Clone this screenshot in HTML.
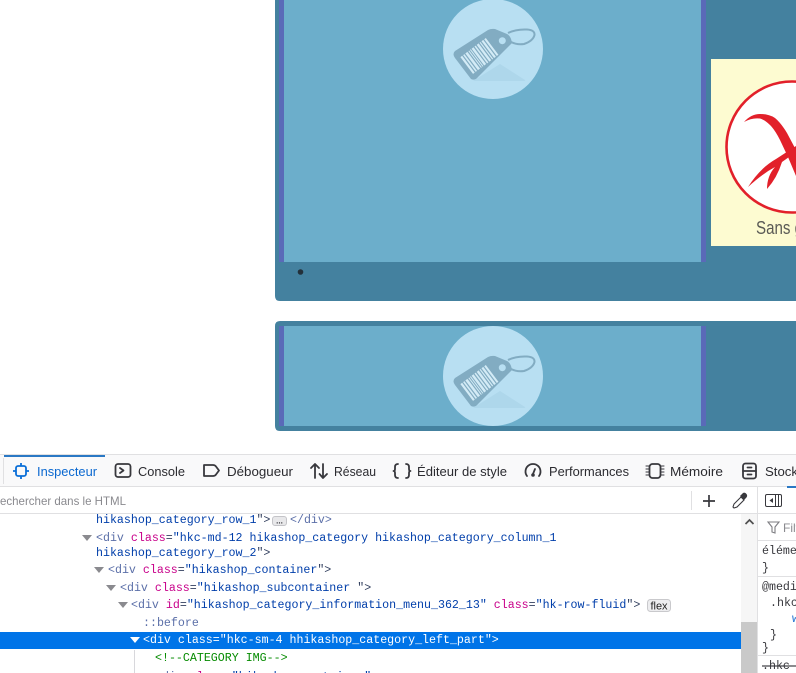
<!DOCTYPE html>
<html lang="fr">
<head>
<meta charset="utf-8">
<title>Inspecteur</title>
<style>
html,body{margin:0;padding:0;background:#fff;width:796px;height:673px;overflow:hidden}
svg{display:block}
.ui{font-family:"Liberation Sans",sans-serif;font-size:12.5px;fill:#2b2b30}
.m{font-family:"Liberation Mono",monospace;font-size:11.64px;fill:#003eaa;white-space:pre}
.t{fill:#5b6fa8}.a{fill:#c8008a}.v{fill:#003eaa}.d{fill:#33405f}
.ic{fill:none;stroke:#38383d;stroke-width:1.8;stroke-linejoin:round;stroke-linecap:round}
</style>
</head>
<body>
<svg width="796" height="673" viewBox="0 0 796 673" xmlns="http://www.w3.org/2000/svg">
<defs>
<g id="tag">
  <circle cx="493" cy="49" r="50" fill="#b8dff2"/>
  <path d="M473,81 L500,64 L525,80 Q526,81 523,81 Z" fill="#aed7eb"/>
  <path d="M508,33 Q516,29 527,29.500 Q535,30 534.500,35 Q533,41 524,44 Q517,45 511,42" fill="none" stroke="#82acc2" stroke-width="2"/>
  <path d="M455,51 L488,30 Q491,28.500 495,29 L507,34 Q511,36 512,43 L478,77 Q475,81 471,79 L455,58 Q452,54 455,51 Z" fill="#82acc2"/>
  <line x1="466.700" y1="65.500" x2="493.300" y2="45.500" stroke="#d3ebf6" stroke-width="21" stroke-dasharray="2.200 1.200 1.600 1.200 2.600 1.200 1 1 1 1 2.400 1.200 1.600 1.200 2.400 1.200 1.200 1.200 2.200 1.200 2"/>
  <circle cx="502.300" cy="40.700" r="3.500" fill="#b8dff2"/>
</g>
<clipPath id="yc"><rect x="711" y="59" width="85" height="187"/></clipPath>
</defs>

<!-- page -->
<rect width="796" height="673" fill="#fff"/>
<path d="M275,-10 H796 V301 H280 Q275,301 275,296 Z" fill="#44819f"/>
<rect x="279" y="-5" width="427" height="267" fill="#5a6ab8"/>
<rect x="284" y="-5" width="417" height="267" fill="#6caecb"/>
<use href="#tag"/>
<rect x="711" y="59" width="85" height="187" fill="#fdfbd1"/>
<g clip-path="url(#yc)">
  <circle cx="792" cy="147" r="65.500" fill="#fff" stroke="#e2202a" stroke-width="2.600"/>
  <path d="M744,122 Q751,114 760,114 Q769,114 775,118 Q781,123 787,133 L796,150 V176 L788,157 L780,140 Q775,130 770,125 Q765,120 760,118.500 Q752,117.500 744,122 Z" fill="#e2202a"/>
  <path d="M748,187 Q760,168 776,159 L796,146 V152 L782,162 Q777,178 767,189 Q767,176 775,167 Q762,174 748,187 Z" fill="#e2202a"/>
  <text x="756" y="234" font-family="'Liberation Sans',sans-serif" font-size="18" fill="#5a5a55" textLength="47" lengthAdjust="spacingAndGlyphs">Sans g</text>
</g>
<circle cx="300.500" cy="272" r="2.800" fill="#23303a"/>

<path d="M275,326 Q275,321 280,321 H796 V431 H280 Q275,431 275,426 Z" fill="#44819f"/>
<rect x="279" y="326" width="427" height="100" fill="#5a6ab8"/>
<rect x="284" y="326" width="417" height="100" fill="#6caecb"/>
<use href="#tag" y="327"/>

<!-- devtools toolbar -->
<rect x="0" y="454" width="796" height="219" fill="#fff"/>
<rect x="0" y="454" width="796" height="33" fill="#f9f9fa"/>
<rect x="0" y="454" width="796" height="1" fill="#e0e0e2"/>
<rect x="0" y="486" width="796" height="1" fill="#e0e0e2"/>
<rect x="3" y="458" width="1" height="26" fill="#e0e0e2"/>
<rect x="4" y="455" width="101" height="2" fill="#2a78c4"/>

<!-- inspector icon -->
<g fill="none" stroke="#0a6fd8" stroke-width="1.800">
  <rect x="16" y="466" width="10" height="10" rx="2"/>
  <path d="M21,463 V466 M21,476 V479 M13,471 H16 M26,471 H29"/>
</g>
<text class="ui" x="37" y="476" style="fill:#0a68d0" textLength="60" lengthAdjust="spacingAndGlyphs">Inspecteur</text>

<!-- console -->
<rect class="ic" x="115.500" y="464" width="15" height="13" rx="2.500"/>
<path class="ic" d="M120,468 L123.500,470.500 L120,473"/>
<text class="ui" x="138" y="476" textLength="47" lengthAdjust="spacingAndGlyphs">Console</text>

<!-- debugger -->
<path class="ic" d="M204,465 H213 Q215,465 216,466.500 L219,470.500 L216,474.500 Q215,476 213,476 H204 Z"/>
<text class="ui" x="227" y="476" textLength="66" lengthAdjust="spacingAndGlyphs">Débogueur</text>

<!-- network -->
<path class="ic" d="M315,478 V464 M311,468 L315,464 L319,468 M323,464 V478 M319.500,474 L323,478 L327,474"/>
<text class="ui" x="334" y="476" textLength="42" lengthAdjust="spacingAndGlyphs">Réseau</text>

<!-- style -->
<path class="ic" d="M398,464 Q395,464 395,467 V469 Q395,471 393.500,471 Q395,471 395,473 V475 Q395,478 398,478 M406,464 Q409,464 409,467 V469 Q409,471 410.500,471 Q409,471 409,473 V475 Q409,478 406,478"/>
<text class="ui" x="417" y="476" textLength="90" lengthAdjust="spacingAndGlyphs">Éditeur de style</text>

<!-- performance -->
<path class="ic" d="M527,476 A7.500,7.500 0 1 1 539,476"/>
<path class="ic" d="M533,474 L535,469"/>
<circle cx="533" cy="475" r="1.800" fill="#38383d"/>
<text class="ui" x="549" y="476" textLength="80" lengthAdjust="spacingAndGlyphs">Performances</text>

<!-- memory -->
<rect class="ic" x="649.500" y="464" width="11" height="14" rx="3"/>
<path class="ic" d="M646,466 H649 M646,469 H649 M646,472 H649 M646,475 H649 M661,466 H664 M661,469 H664 M661,472 H664 M661,475 H664" style="stroke-width:1.100"/>
<text class="ui" x="670" y="476" textLength="53" lengthAdjust="spacingAndGlyphs">Mémoire</text>

<!-- storage -->
<rect class="ic" x="743" y="463.500" width="13" height="15" rx="2.500"/>
<path class="ic" d="M743,471 H756 M747.500,467.500 H751.500 M747.500,474.500 H751.500"/>
<text class="ui" x="765" y="476" textLength="33" lengthAdjust="spacingAndGlyphs">Stock</text>

<!-- search row -->
<rect x="0" y="513" width="758" height="1" fill="#e0e0e2"/>
<text class="ui" x="0" y="505" style="fill:#8a8a8f;font-size:12px" textLength="126" lengthAdjust="spacingAndGlyphs">echercher dans le HTML</text>
<rect x="691" y="491" width="1" height="19" fill="#e0e0e2"/>
<path d="M709,495 V507 M703,501 H715" stroke="#38383d" stroke-width="1.700" fill="none"/>
<path d="M733,507 L734,504 L741,497 L744,500 L737,507 L734,508 Z" fill="#fff" stroke="#38383d" stroke-width="1.100"/>
<path d="M740,496 L743,493 Q745,492 746.500,494 Q748,496 746,498 L744,500 Z" fill="#38383d"/>

<!-- sidebar -->
<rect x="757" y="487" width="1" height="186" fill="#e0e0e2"/>
<rect x="787" y="486" width="9" height="2" fill="#2a78c4"/>
<rect x="765.500" y="494.500" width="16" height="12" rx="1.500" fill="none" stroke="#38383d" stroke-width="1"/>
<path d="M775.500,495 V506 M778.500,495 V506" stroke="#38383d" stroke-width="1"/>
<path d="M773,498 V503 L769.500,500.500 Z" fill="#38383d"/>
<rect x="758" y="513" width="38" height="1" fill="#e0e0e2"/>
<path d="M768,522 H779 L775,527 V533 L772,532 V527 Z" fill="none" stroke="#7d7d82" stroke-width="1.100"/>
<text class="ui" x="783" y="532" style="fill:#8a8a8f;font-size:12px">Filt</text>
<rect x="758" y="540" width="38" height="1" fill="#e0e0e2"/>
<rect x="758" y="576" width="38" height="1" fill="#e0e0e2"/>
<rect x="758" y="655" width="38" height="1" fill="#e0e0e2"/>
<g class="m" style="fill:#38383d">
  <text x="762" y="554">éléme</text>
  <text x="762" y="571">}</text>
  <text x="762" y="590">@medi</text>
  <text x="770" y="606">.hkc</text>
  <text x="792" y="622" style="fill:#1d6fd0">w</text>
  <text x="770" y="638">}</text>
  <text x="762" y="651">}</text>
  <text x="762" y="669" text-decoration="line-through">.hkc-</text>
</g>

<!-- scrollbar -->
<rect x="741" y="514" width="16" height="159" fill="#f6f6f6"/>
<rect x="741" y="622" width="16" height="51" fill="#c9c9c9"/>
<path d="M745.500,524 L749.500,520 L753.500,524" fill="none" stroke="#505050" stroke-width="1.700"/>

<!-- highlighted row -->
<rect x="0" y="632" width="741" height="17" fill="#0074e8"/>

<!-- markup -->
<text class="m" x="96" y="523">hikashop_category_row_1<tspan class="d">"&gt;</tspan></text>
<rect x="272.500" y="516.500" width="14" height="9" rx="2.500" fill="#e8e8ea" stroke="#c4c4c8"/>
<text x="279.500" y="523.500" text-anchor="middle" font-family="'Liberation Sans',sans-serif" font-size="8" font-weight="bold" fill="#38383d">...</text>
<text class="m" x="290" y="523"><tspan class="t">&lt;/div&gt;</tspan></text>

<path d="M82,535 H92 L87,541 Z" fill="#8a8a8f"/>
<text class="m" x="96" y="541"><tspan class="t">&lt;div</tspan> <tspan class="a">class</tspan><tspan class="d">=</tspan>"hkc-md-12 hikashop_category hikashop_category_column_1</text>
<text class="m" x="96" y="556">hikashop_category_row_2<tspan class="d">"&gt;</tspan></text>

<path d="M94,567 H104 L99,573 Z" fill="#8a8a8f"/>
<text class="m" x="108" y="573"><tspan class="t">&lt;div</tspan> <tspan class="a">class</tspan><tspan class="d">=</tspan>"hikashop_container<tspan class="d">"&gt;</tspan></text>

<path d="M106,585 H116 L111,591 Z" fill="#8a8a8f"/>
<text class="m" x="120" y="591"><tspan class="t">&lt;div</tspan> <tspan class="a">class</tspan><tspan class="d">=</tspan>"hikashop_subcontainer <tspan class="d">"&gt;</tspan></text>

<path d="M118,602 H128 L123,608 Z" fill="#8a8a8f"/>
<text class="m" x="131" y="608"><tspan class="t">&lt;div</tspan> <tspan class="a">id</tspan><tspan class="d">=</tspan>"hikashop_category_information_menu_362_13" <tspan class="a">class</tspan><tspan class="d">=</tspan>"hk-row-fluid<tspan class="d">"&gt;</tspan></text>
<rect x="647.500" y="599.500" width="23" height="12" rx="3" fill="#ededef" stroke="#c9c9cc"/>
<text x="659" y="609.500" text-anchor="middle" font-family="'Liberation Sans',sans-serif" font-size="11" fill="#222">flex</text>

<text class="m" x="143" y="626"><tspan class="t">::before</tspan></text>

<path d="M130,637 H140 L135,643 Z" fill="#fff"/>
<text class="m" x="143" y="643" style="fill:#fff">&lt;div class="hkc-sm-4 hhikashop_category_left_part"&gt;</text>

<rect x="134" y="650" width="1" height="23" fill="#d8d8dc"/>
<text class="m" x="155" y="661" style="fill:#058b00">&lt;!--CATEGORY IMG--&gt;</text>
<text class="m" x="155" y="680"><tspan class="t">&lt;div</tspan> <tspan class="a">class</tspan><tspan class="d">=</tspan>"hikashop_container"</text>
</svg>
</body>
</html>
